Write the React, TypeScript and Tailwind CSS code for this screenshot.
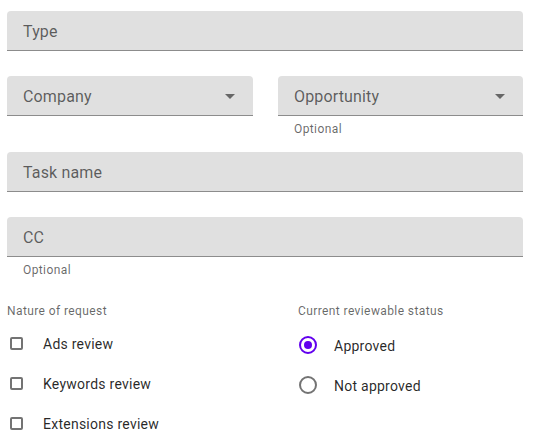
import React from "react";

function Arrow() {
  return (
    <svg width="10" height="5" viewBox="0 0 10 5" className="absolute right-[18px] top-[18px]">
      <polygon points="0,0 10,0 5,5" fill="rgba(0,0,0,0.54)" />
    </svg>
  );
}

function Field({ label, select }: { label: string; select?: boolean }) {
  return (
    <div className="relative h-[40px] rounded-t-[4px] bg-[#e0e0e0] border-b border-[#8c8c8c] flex items-center pl-[16px] pt-[2px]">
      <span className="text-[16px] leading-[24px] tracking-[0.15px] text-black/60">{label}</span>
      {select && <Arrow />}
    </div>
  );
}

function Helper() {
  return (
    <div className="mt-[5px] h-[16px] pl-[16px] text-[12px] leading-[16px] tracking-[0.4px] text-black/60">
      Optional
    </div>
  );
}

function Check({ label }: { label: string }) {
  return (
    <div className="h-[40px] flex items-center">
      <div className="ml-[3px] w-[13px] h-[13px] rounded-[2px] border-2 border-black/55" />
      <span className="ml-[20px] pt-[1px] text-[14px] leading-[20px] tracking-[0.25px] text-black/85">{label}</span>
    </div>
  );
}

function Radio({ label, checked }: { label: string; checked?: boolean }) {
  return (
    <div className="h-[40px] flex items-center">
      <div
        className={
          "ml-[1px] w-[18px] h-[18px] rounded-full border-2 flex items-center justify-center " +
          (checked ? "border-[#6200ee]" : "border-black/55")
        }
      >
        {checked && <div className="w-[8px] h-[8px] rounded-full bg-[#6200ee]" />}
      </div>
      <span className="ml-[17px] pt-[1px] text-[14px] leading-[20px] tracking-[0.25px] text-black/85">{label}</span>
    </div>
  );
}

export default function App() {
  return (
    <div className="w-[535px] h-[439px] bg-white pl-[7px] pt-[11px] overflow-hidden font-['Roboto',sans-serif]">
      <div className="w-[516px] flex flex-col">
        <Field label="Type" />
        <div className="mt-[25px] grid grid-cols-[246px_245px] gap-x-[25px]">
          <div>
            <Field label="Company" select />
          </div>
          <div>
            <Field label="Opportunity" select />
            <Helper />
          </div>
        </div>
        <div className="mt-[15px]">
          <Field label="Task name" />
        </div>
        <div className="mt-[25px]">
          <Field label="CC" />
          <Helper />
        </div>
        <div className="mt-[25px] grid grid-cols-[291px_1fr]">
          <div>
            <div className="h-[16px] text-[12px] leading-[16px] tracking-[0.4px] text-black/60">Nature of request</div>
            <div className="mt-[4px]">
              <Check label="Ads review" />
              <Check label="Keywords review" />
              <Check label="Extensions review" />
            </div>
          </div>
          <div>
            <div className="h-[16px] text-[12px] leading-[16px] tracking-[0.4px] text-black/60">Current reviewable status</div>
            <div className="mt-[6px]">
              <Radio label="Approved" checked />
              <Radio label="Not approved" />
            </div>
          </div>
        </div>
      </div>
    </div>
  );
}
